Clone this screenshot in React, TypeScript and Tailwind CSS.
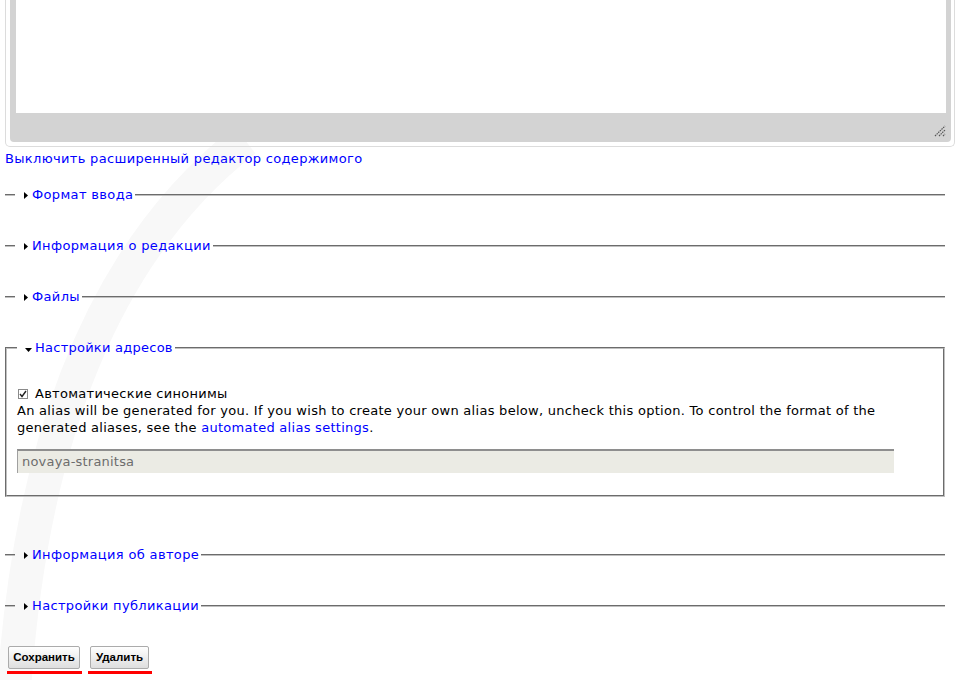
import React from "react";

const font = { fontFamily: '"DejaVu Sans", Verdana, sans-serif' };
const btnFont = { fontFamily: '"Liberation Sans", Arial, sans-serif' };

const Closed = () => (
  <svg width="4" height="7" viewBox="0 0 4 7" className="absolute left-[7px] top-[5px]">
    <path d="M0 0 L4 3.5 L0 7 Z" fill="#000" />
  </svg>
);

const Open = () => (
  <svg width="7" height="4" viewBox="0 0 7 4" className="absolute left-[6px] top-[8px]">
    <path d="M0 0 L7 0 L3.5 4 Z" fill="#000" />
  </svg>
);

type FsProps = { title: string; className?: string };

const CollapsedFieldset: React.FC<FsProps> = ({ title, className = "" }) => (
  <fieldset
    className={`ml-[5px] w-[940px] border-t-2 border-[#c0c0c0] [border-style:groove] pl-[10px] ${className}`}
  >
    <legend className="px-[2px] text-[13px] leading-[17px] tracking-[0.35px]">
      <a className="relative pl-[15px] text-[#0000ff] cursor-pointer">
        <Closed />
        {title}
      </a>
    </legend>
  </fieldset>
);

export default function App() {
  return (
    <div className="relative h-[680px] w-full overflow-hidden bg-white text-black" style={font}>
      {/* faint watermark behind the page */}
      <svg className="pointer-events-none absolute left-0 top-0" width="966" height="680">
        <path d="M245 140 Q 40 300 14 690" fill="none" stroke="#f8f8f8" strokeWidth="34" />
      </svg>

      <div className="relative">
        {/* editor */}
        <div className="ml-[5px] h-[147px] w-[950px] rounded-b-[5px] border-x border-b border-[#dcdcdc] pb-[4px] pl-[4px] pr-[3px]">
          <div className="relative h-full rounded-b-[4px] bg-[#d3d3d3] pb-[29px] pl-[6px] pr-[5px]">
            <div className="h-full bg-white" />
            <svg width="12" height="12" viewBox="0 0 12 12" className="absolute bottom-[5px] right-[5px]">
              <path d="M1 11 L11 1 M5 11 L11 5 M9 11 L11 9" stroke="#555" strokeWidth="1.2" strokeDasharray="1.5 0.8" />
            </svg>
          </div>
        </div>

        <a className="ml-[5px] mt-[3px] block text-[13px] leading-[17px] tracking-[0.33px] text-[#0000ff]">
          Выключить расширенный редактор содержимого
        </a>

        <CollapsedFieldset title="Формат ввода" className="mt-[19px]" />
        <CollapsedFieldset title="Информация о редакции" className="mt-[34px]" />
        <CollapsedFieldset title="Файлы" className="mt-[34px]" />

        {/* expanded */}
        <fieldset className="ml-[5px] mt-[34px] w-[940px] border-2 border-[#c0c0c0] [border-style:groove] pb-[22px] pl-[10px]">
          <legend className="px-[2px] text-[13px] leading-[17px] tracking-[0.25px]">
            <a className="relative pl-[16px] text-[#0000ff] cursor-pointer">
              <Open />
              Настройки адресов
            </a>
          </legend>
          <div className="mt-[29px] flex items-center text-[13px] leading-[17px]">
            <span className="ml-[1px] flex h-[10px] w-[10px] items-center justify-center border border-[#8a8a8a] bg-white">
              <svg width="8" height="8" viewBox="0 0 8 8">
                <path d="M1 4 L3 6.5 L7 1" fill="none" stroke="#222" strokeWidth="1.4" />
              </svg>
            </span>
            <span className="ml-[7px] tracking-[0.28px]">Автоматические синонимы</span>
          </div>
          <div className="w-[886px] text-[13px] leading-[17px] tracking-[0.28px]">
            An alias will be generated for you. If you wish to create your own alias below, uncheck this option. To
            control the format of the generated aliases, see the{" "}
            <a className="text-[#0000ff]">automated alias settings</a>.
          </div>
          <div className="mt-[13px] flex h-[24px] w-[877px] items-center border-l border-t-2 border-l-[#a0a0a0] border-t-[#8e8e8e] bg-[#ebebe4] pl-[4px] text-[13px] tracking-[0.2px] text-[#6d6d6d]">
            novaya-stranitsa
          </div>
        </fieldset>

        <CollapsedFieldset title="Информация об авторе" className="mt-[49px]" />
        <CollapsedFieldset title="Настройки публикации" className="mt-[34px]" />

        {/* buttons */}
        <div className="mt-[32px] flex items-start" style={btnFont}>
          <div className="ml-[7px] flex w-[75px] flex-col">
            <button className="ml-[1px] h-[23px] w-[72px] rounded-[2px] border border-[#ababab] bg-gradient-to-b from-white to-[#dedede] text-[11.5px] font-bold">
              Сохранить
            </button>
            <div className="mt-[2px] h-[3px] w-full bg-[#ff0000]" />
          </div>
          <div className="ml-[6px] flex w-[64px] flex-col">
            <button className="ml-[2px] h-[23px] w-[59px] rounded-[2px] border border-[#ababab] bg-gradient-to-b from-white to-[#dedede] text-[11.5px] font-bold">
              Удалить
            </button>
            <div className="mt-[2px] h-[3px] w-full bg-[#ff0000]" />
          </div>
        </div>
      </div>
    </div>
  );
}
